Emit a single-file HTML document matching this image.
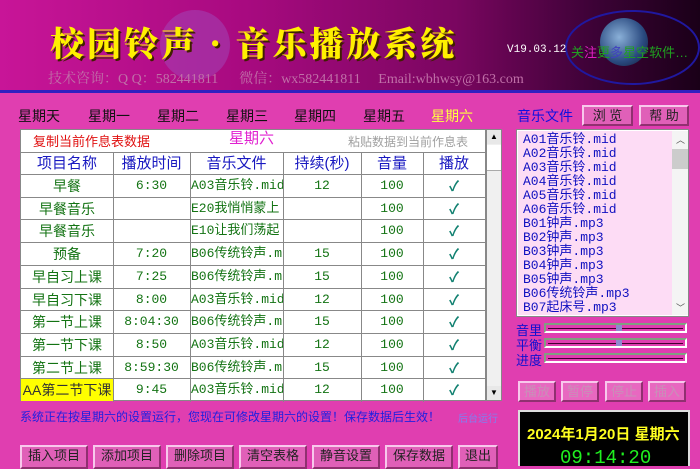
<!DOCTYPE html>
<html><head><meta charset="utf-8"><style>
*{margin:0;padding:0;box-sizing:border-box}
body{width:700px;height:466px;overflow:hidden;position:relative;background:#e03eb0;font-family:"Liberation Sans","Noto Sans CJK SC",sans-serif}
.a{position:absolute;white-space:nowrap}
.hdr{left:0;top:0;width:700px;height:91px;background:linear-gradient(90deg,#c81598 0%,#a80a80 35%,#7a0660 65%,#3c0236 85%,#1a0018 100%)}
.tab{top:106px;font-size:14px;color:#111}
.tb{left:20px;top:129px;width:466px;height:272px;background:#fff;border:1px solid #888}
.c{position:absolute;text-align:center;font-size:14px;color:#137313;overflow:hidden;line-height:22px}
.m{font-family:"Liberation Mono","Noto Sans CJK SC",monospace;font-size:13px}
.hl{position:absolute;left:0;width:464px;height:1px;background:#888}
.vl{position:absolute;top:23px;width:1px;height:249px;background:#888}
.btn{position:absolute;background:#e060b8;border:2px solid;border-color:#f8c8ec #903070 #903070 #f8c8ec;font-size:13px;text-align:center;color:#222;line-height:18px}
.dis{color:#c890b8;background:#e868c0}
.lst{left:517px;top:130px;width:171px;height:186px;background:#fddcf5;border:1px solid #fff;outline:1px solid #888}
.li{position:absolute;left:5px;font-family:"Liberation Mono","Noto Sans CJK SC",monospace;font-size:13px;color:#1010c0;line-height:14px}
.sl{position:absolute;left:544px;width:143px;height:10px;border:2px solid #bfe0c8;border-color:#80a080 #fff #fff #80a080}
.sl i{position:absolute;left:2px;right:2px;top:3px;height:1px;background:#400030}
.sl b{position:absolute;top:0;width:6px;height:6px;background:#9088d0}
.lb{position:absolute;left:516px;font-size:13px;color:#1010d0}
</style></head><body>
<div class="a hdr"></div>
<div class="a" style="left:0;top:90px;width:700px;height:3px;background:#3020c0"></div>
<div class="a" style="left:160px;top:10px;width:70px;height:70px;border-radius:50%;background:#a050c0;opacity:.45"></div>
<div class="a" style="left:565px;top:10px;width:135px;height:75px;border:2px solid #2018a0;border-radius:50%"></div>
<div class="a" style="left:600px;top:18px;width:48px;height:48px;border-radius:50%;background:radial-gradient(circle at 40% 40%,#8ab0d8,#2a4a80 60%,#101830)"></div>
<div class="a" style="left:50px;top:17px;font-family:'Noto Serif CJK SC',serif;font-weight:900;font-size:34px;color:#fff000;letter-spacing:3px;text-shadow:2px 2px 0 #402000">校园铃声 · 音乐播放系统</div>
<div class="a" style="left:507px;top:44px;font-family:'Liberation Mono',monospace;font-size:11px;color:#fff">V19.03.12</div>
<div class="a" style="left:571px;top:42px;font-size:13px;color:#20a020">关<span style="color:#e020c0">注</span>更<span style="color:#4040c0">多</span>星空软件…</div>
<div class="a" style="left:48px;top:68px;font-family:'Liberation Serif','Noto Serif CJK SC',serif;font-size:14px;color:#c070a8">技术咨询：Q Q：582441811&nbsp;&nbsp;&nbsp;&nbsp;&nbsp;&nbsp;微信：wx582441811&nbsp;&nbsp;&nbsp;&nbsp;&nbsp;Email:wbhwsy@163.com</div>

<div class="a tab" style="left:18px">星期天</div>
<div class="a tab" style="left:88px">星期一</div>
<div class="a tab" style="left:157px">星期二</div>
<div class="a tab" style="left:226px">星期三</div>
<div class="a tab" style="left:294px">星期四</div>
<div class="a tab" style="left:363px">星期五</div>
<div class="a tab" style="left:431px;color:#ffff40">星期六</div>
<div class="a" style="left:517px;top:106px;font-size:14px;color:#1010e0">音乐文件</div>
<div class="btn" style="left:582px;top:105px;width:51px;height:21px">浏 览</div>
<div class="btn" style="left:639px;top:105px;width:50px;height:21px">帮 助</div>

<div class="a tb">
<div class="c" style="left:12px;top:1px;color:#e01010;font-size:13px">复制当前作息表数据</div>
<div class="c" style="left:208px;top:-2px;color:#e020d0;font-size:15px">星期六</div>
<div class="c" style="left:327px;top:1px;color:#a0a0a0;font-size:12px">粘贴数据到当前作息表</div>
<div class="hl" style="top:22px"></div>
<div class="vl" style="left:92px"></div><div class="vl" style="left:169px"></div><div class="vl" style="left:262px"></div><div class="vl" style="left:340px"></div><div class="vl" style="left:402px"></div>
<div class="c" style="left:0;top:23px;width:92px;color:#1818c0;font-size:15px">项目名称</div>
<div class="c" style="left:92px;top:23px;width:77px;color:#1818c0;font-size:15px">播放时间</div>
<div class="c" style="left:169px;top:23px;width:93px;color:#1818c0;font-size:15px">音乐文件</div>
<div class="c" style="left:262px;top:23px;width:78px;color:#1818c0;font-size:15px">持续(秒)</div>
<div class="c" style="left:340px;top:23px;width:62px;color:#1818c0;font-size:15px">音量</div>
<div class="c" style="left:402px;top:23px;width:62px;color:#1818c0;font-size:15px">播放</div>
<div id="rows"></div>
</div>
<div class="a" style="left:486px;top:129px;width:16px;height:272px;background:#f0f0f0;border:1px solid #888"></div>
<div class="a" style="left:487px;top:130px;width:14px;height:14px;background:#e8e8e8;font-size:8px;text-align:center;line-height:14px">▲</div>
<div class="a" style="left:487px;top:145px;width:14px;height:26px;background:#fff;border-bottom:1px solid #aaa"></div>
<div class="a" style="left:487px;top:386px;width:14px;height:14px;background:#e8e8e8;font-size:8px;text-align:center;line-height:14px">▼</div>

<div class="a lst">
<div class="a" style="left:154px;top:0;width:16px;height:184px;background:#f4f4f4"></div>
<div class="a" style="left:154px;top:18px;width:16px;height:20px;background:#ccc"></div>
<div class="a" style="left:158px;top:2px;font-size:9px;color:#555">︿</div>
<div class="a" style="left:158px;top:170px;font-size:9px;color:#555">﹀</div>
<div class="li" style="top:2px">A01音乐铃.mid</div>
<div class="li" style="top:16px">A02音乐铃.mid</div>
<div class="li" style="top:30px">A03音乐铃.mid</div>
<div class="li" style="top:44px">A04音乐铃.mid</div>
<div class="li" style="top:58px">A05音乐铃.mid</div>
<div class="li" style="top:72px">A06音乐铃.mid</div>
<div class="li" style="top:86px">B01钟声.mp3</div>
<div class="li" style="top:100px">B02钟声.mp3</div>
<div class="li" style="top:114px">B03钟声.mp3</div>
<div class="li" style="top:128px">B04钟声.mp3</div>
<div class="li" style="top:142px">B05钟声.mp3</div>
<div class="li" style="top:156px">B06传统铃声.mp3</div>
<div class="li" style="top:170px">B07起床号.mp3</div>
</div>
<div class="lb" style="top:320px">音里</div><div class="lb" style="top:335px">平衡</div><div class="lb" style="top:350px">进度</div>
<div class="sl" style="top:323px"><i></i><b style="left:70px"></b></div>
<div class="sl" style="top:338px"><i></i><b style="left:70px"></b></div>
<div class="sl" style="top:353px"><i></i></div>
<div class="btn dis" style="left:518px;top:381px;width:38px;height:21px">播放</div>
<div class="btn dis" style="left:561px;top:381px;width:38px;height:21px">暂停</div>
<div class="btn dis" style="left:605px;top:381px;width:38px;height:21px">停止</div>
<div class="btn dis" style="left:648px;top:381px;width:38px;height:21px">插入</div>
<div class="a" style="left:20px;top:408px;font-size:12px;color:#2020e0">系统正在按星期六的设置运行，您现在可修改星期六的设置！保存数据后生效！</div>
<div class="a" style="left:458px;top:410px;font-size:10px;color:#8080f0">后台运行</div>
<div class="a" style="left:518px;top:410px;width:172px;height:56px;background:#000;border:2px solid #ddd;border-bottom:none"></div>
<div class="a" style="left:527px;top:423px;font-size:15px;font-weight:bold;color:#ffff20;font-family:'Liberation Sans','Noto Sans CJK SC',sans-serif">2024年1月20日 星期六</div>
<div class="a" style="left:560px;top:447px;font-size:19px;color:#20f020;font-family:'Liberation Mono',monospace">09:14:20</div>
<div class="btn" style="left:20px;top:445px;width:68px;height:24px">插入项目</div>
<div class="btn" style="left:93px;top:445px;width:68px;height:24px">添加项目</div>
<div class="btn" style="left:166px;top:445px;width:68px;height:24px">删除项目</div>
<div class="btn" style="left:239px;top:445px;width:68px;height:24px">清空表格</div>
<div class="btn" style="left:312px;top:445px;width:68px;height:24px">静音设置</div>
<div class="btn" style="left:385px;top:445px;width:68px;height:24px">保存数据</div>
<div class="btn" style="left:458px;top:445px;width:40px;height:24px">退出</div>
<script>
var d=[["早餐","6:30","A03音乐铃.mid","12"],["早餐音乐","","E20我悄悄蒙上",""],["早餐音乐","","E10让我们荡起",""],["预备","7:20","B06传统铃声.m","15"],["早自习上课","7:25","B06传统铃声.m","15"],["早自习下课","8:00","A03音乐铃.mid","12"],["第一节上课","8:04:30","B06传统铃声.m","15"],["第一节下课","8:50","A03音乐铃.mid","12"],["第二节上课","8:59:30","B06传统铃声.m","15"],["AA第二节下课","9:45","A03音乐铃.mid","12"]];
var h="";for(var i=0;i<10;i++){var t=Math.round(44+i*22.7),r=d[i];
h+='<div class="hl" style="top:'+t+'px"></div>';
var bg=i==9?'background:#ffff00;color:#333;':'';
h+='<div class="c" style="left:0;top:'+(t+1)+'px;width:92px;height:22px;'+bg+'">'+r[0]+'</div>';
h+='<div class="c m" style="left:92px;top:'+(t+1)+'px;width:77px">'+r[1]+'</div>';
h+='<div class="c m" style="left:170px;top:'+(t+1)+'px;width:92px;text-align:left">'+r[2]+'</div>';
h+='<div class="c m" style="left:262px;top:'+(t+1)+'px;width:78px">'+r[3]+'</div>';
h+='<div class="c m" style="left:340px;top:'+(t+1)+'px;width:62px">100</div>';
h+='<div class="c" style="left:402px;top:'+(t+1)+'px;width:62px;color:#108070;font-weight:bold">✓</div>';}
document.getElementById("rows").innerHTML=h;
</script>
</body></html>
